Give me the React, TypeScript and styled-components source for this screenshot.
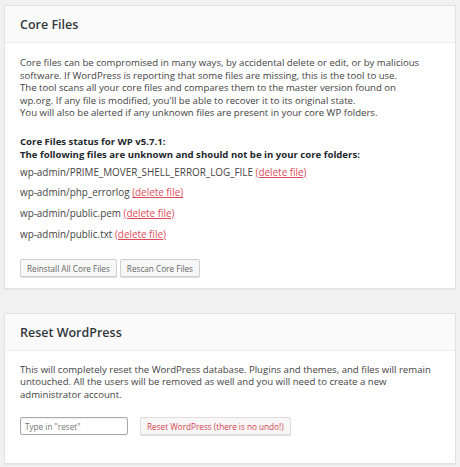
import React from "react";
import styled, { createGlobalStyle } from "styled-components";

const GlobalStyle = createGlobalStyle`
  html, body {
    margin: 0;
    padding: 0;
    background: #f1f1f1;
  }
  body {
    font-family: "Open Sans", "Noto Sans", sans-serif;
    color: #444;
  }
`;

const Page = styled.div`
  padding: 5px 4px 5px 4px;
  width: 452px;
  display: flex;
  flex-direction: column;
  gap: 24px;
`;

const Panel = styled.section`
  background: #fff;
  border: 1px solid #e2e2e2;
  box-shadow: 0 1px 1px rgba(0, 0, 0, 0.04);
`;

const PanelHeader = styled.h2`
  margin: 0;
  height: 36px;
  padding: 0 15px;
  display: flex;
  align-items: center;
  background: #fafafa;
  border-bottom: 1px solid #ececec;
  font-size: 12.5px;
  font-weight: 600;
  color: #32373c;
`;

const PanelBody = styled.div<{ $pad: string }>`
  padding: ${(p) => p.$pad};
  font-size: 9.6px;
`;

const Intro = styled.p`
  margin: 0;
  line-height: 12.5px;
  white-space: nowrap;
`;

const Status = styled.p`
  margin: 15px 0 0;
  font-weight: 700;
  line-height: 13.5px;
  color: #23282d;
`;

const FileList = styled.ul`
  list-style: none;
  margin: 0;
  padding: 0;
`;

const FileRow = styled.li`
  font-size: 9.9px;
  line-height: 20.7px;
`;

const DeleteLink = styled.a`
  color: #dd4b5a;
  text-decoration: underline;
  cursor: pointer;
`;

const Actions = styled.div<{ $top: number; $gap: number }>`
  display: flex;
  align-items: center;
  gap: ${(p) => p.$gap}px;
  margin-top: ${(p) => p.$top}px;
`;

const Button = styled.button<{ $danger?: boolean }>`
  height: 18px;
  padding: 0 6px;
  font-family: inherit;
  font-size: 8.2px;
  color: ${(p) => (p.$danger ? "#d43f52" : "#666")};
  background: #f7f7f7;
  border: 1px solid ${(p) => (p.$danger ? "#e3dede" : "#d0d0d0")};
  border-radius: 2px;
  box-shadow: 0 1px 0 #ddd;
  cursor: pointer;
`;

const ResetInput = styled.input`
  box-sizing: border-box;
  width: 108px;
  height: 18px;
  padding: 0 4px;
  font-family: inherit;
  font-size: 8.2px;
  color: #444;
  border: 1px solid #a9a9a9;
  border-radius: 2px;
  box-shadow: inset 0 1px 2px rgba(0, 0, 0, 0.07);
  &::placeholder {
    color: #777;
  }
`;

const files = [
  "wp-admin/PRIME_MOVER_SHELL_ERROR_LOG_FILE",
  "wp-admin/php_errorlog",
  "wp-admin/public.pem",
  "wp-admin/public.txt",
];

export default function App() {
  return (
    <>
      <GlobalStyle />
      <Page>
        <Panel>
          <PanelHeader>Core Files</PanelHeader>
          <PanelBody $pad="14px 15px 11px">
            <Intro>
              Core files can be compromised in many ways, by accidental delete
              or edit, or by malicious
              <br />
              software. If WordPress is reporting that some files are missing,
              this is the tool to use.
              <br />
              The tool scans all your core files and compares them to the
              master version found on
              <br />
              wp.org. If any file is modified, you'll be able to recover it to
              its original state.
              <br />
              You will also be alerted if any unknown files are present in your
              core WP folders.
            </Intro>
            <Status>
              Core Files status for WP v5.7.1:
              <br />
              The following files are unknown and should not be in your core
              folders:
            </Status>
            <FileList>
              {files.map((f) => (
                <FileRow key={f}>
                  {f} <DeleteLink>(delete file)</DeleteLink>
                </FileRow>
              ))}
            </FileList>
            <Actions $top={14.7} $gap={3}>
              <Button>Reinstall All Core Files</Button>
              <Button>Rescan Core Files</Button>
            </Actions>
          </PanelBody>
        </Panel>
        <Panel>
          <PanelHeader>Reset WordPress</PanelHeader>
          <PanelBody $pad="12.75px 15px 28px">
            <Intro>
              This will completely reset the WordPress database. Plugins and
              themes, and files will remain
              <br />
              untouched. All the users will be removed as well and you will
              need to create a new
              <br />
              administrator account.
            </Intro>
            <Actions $top={15.75} $gap={12}>
              <ResetInput placeholder={'Type in "reset"'} />
              <Button $danger>Reset WordPress (there is no undo!)</Button>
            </Actions>
          </PanelBody>
        </Panel>
      </Page>
    </>
  );
}
